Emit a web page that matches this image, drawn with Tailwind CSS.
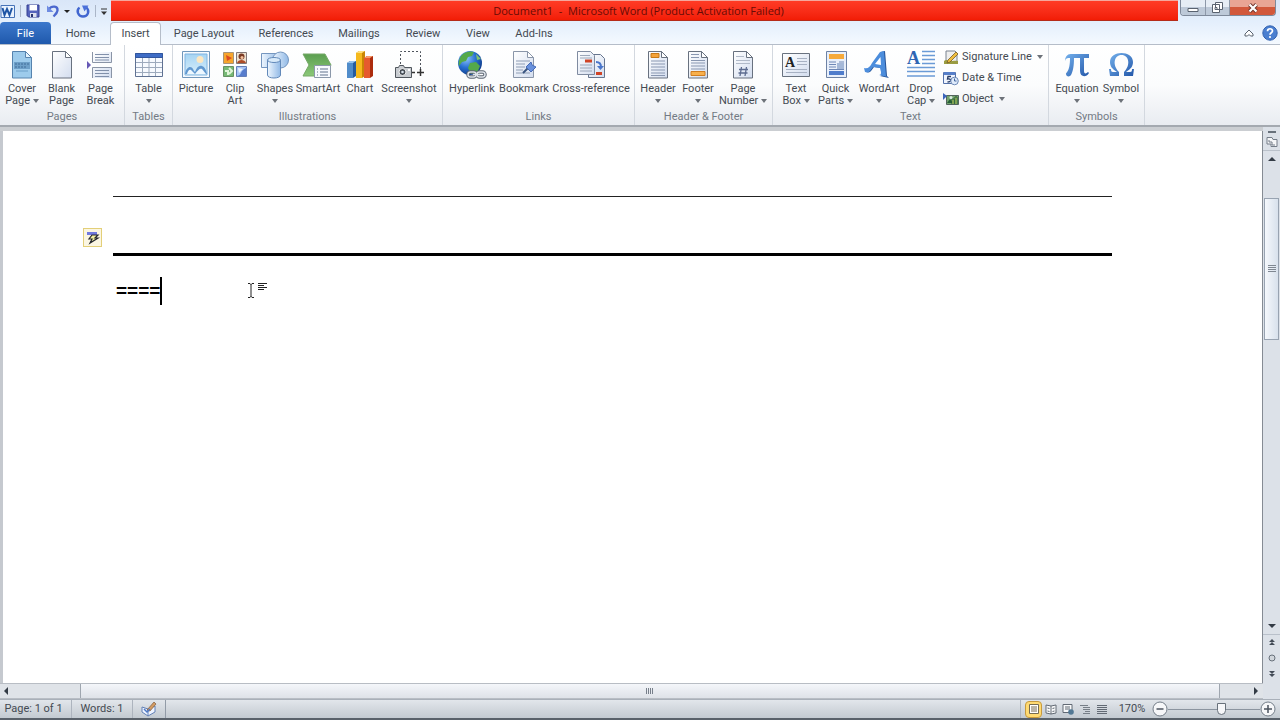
<!DOCTYPE html>
<html lang="en">
<head>
<meta charset="utf-8">
<meta name="viewport" content="width=device-width, initial-scale=1">
<title>Document1 - Microsoft Word</title>
<script src="https://cdn.jsdelivr.net/npm/@tailwindcss/browser@4"></script>
</head>
<body class="flex h-screen flex-col overflow-hidden bg-white font-[Roboto,'Noto_Sans',sans-serif] text-[11px] leading-3 text-[#444a52]">
<svg class="absolute size-0" aria-hidden="true">
  <defs>
    <linearGradient id="paper" x1="0" y1="0" x2="1" y2="1"><stop offset="0" stop-color="#fff"/><stop offset="1" stop-color="#d3ddef"/></linearGradient>
    <linearGradient id="sky" x1="0" y1="0" x2="0" y2="1"><stop offset="0" stop-color="#a5d4f3"/><stop offset="1" stop-color="#d9effb"/></linearGradient>
    <linearGradient id="blue" x1="0" y1="0" x2="1" y2="1"><stop offset="0" stop-color="#73b0ec"/><stop offset="1" stop-color="#2458aa"/></linearGradient>
    <linearGradient id="shape" x1="0" y1="0" x2="1" y2="0"><stop offset="0" stop-color="#eef6fe"/><stop offset="1" stop-color="#91b9e6"/></linearGradient>
    <linearGradient id="green" x1="0" y1="0" x2="0" y2="1"><stop offset="0" stop-color="#5b9e50"/><stop offset="1" stop-color="#8bc878"/></linearGradient>
    <radialGradient id="globe" cx=".35" cy=".3" r=".8"><stop offset="0" stop-color="#8fc5fb"/><stop offset=".5" stop-color="#276fd0"/><stop offset="1" stop-color="#0c337e"/></radialGradient>
    <symbol id="sheet" viewBox="0 0 32 32"><path d="M6.500 2.500h13l6 6v20.500h-19z" fill="url(#paper)" stroke="#68717f"/><path d="M19.500 2.500v6h6z" fill="#fff" stroke="#68717f"/></symbol>
  </defs>
</svg>

<div class="bg-linear-to-b from-[#d9e6f8] via-[#e4effc] to-[#f5faff]">
<header class="flex h-[22px] items-start">
  <div class="flex h-[22px] w-[111px] shrink-0 items-center">
    <svg class="size-4 shrink-0" viewBox="0 0 16 16"><path d="M1 2.500h13.500v12H1z" fill="#eaf3ff" stroke="#4773b8"/><path d="M2.500 5l2 7 2.500-6 2.500 6 2.500-7" fill="none" stroke="#1f55a5" stroke-width="2"/></svg>
    <span class="mx-1 h-3 w-px shrink-0 bg-[#aab6c8]"></span>
    <button aria-label="Save" class="size-4 shrink-0"><svg viewBox="0 0 16 16"><path d="M2 2h12v12H3.500L2 12.500z" fill="#5463bb" stroke="#343f91"/><path d="M4.500 2h7.500v5.500H4.500z" fill="#fff"/><path d="M5 10h6.500v4H5z" fill="#dce0ee"/><path d="M6 11h2v3H6z" fill="#27336f"/></svg></button>
    <button aria-label="Undo" class="ml-1 size-4 shrink-0"><svg viewBox="0 0 16 16"><path d="M3.500 6.500C7 2 13 3 12.500 7.500c-.3 2.500-2 4-4 6" fill="none" stroke="#4c68ce" stroke-width="2.300"/><path d="M2 2.500v6.500h6.500z" fill="#6e8be2"/></svg></button>
    <button aria-label="Undo history" class="ml-0.5 w-2 shrink-0"><svg viewBox="0 0 8 8"><path d="M1 3h6L4 6z" fill="#222"/></svg></button>
    <button aria-label="Repeat" class="ml-1 size-4 shrink-0"><svg viewBox="0 0 16 16"><path d="M4.500 4.500c-4 3.500-1 9 3.500 9 5 0 7-5.500 3.500-9" fill="none" stroke="#4166d0" stroke-width="2.300"/><path d="M7 2.500h6.500l-4 6z" fill="#4c71da"/></svg></button>
    <span class="mx-1 h-3 w-px shrink-0 bg-[#aab6c8]"></span>
    <button aria-label="Customize Quick Access Toolbar" class="w-2 shrink-0"><svg viewBox="0 0 8 10"><path d="M1 3h6" stroke="#333"/><path d="M1 5.500h6L4 9z" fill="#333"/></svg></button>
  </div>
  <h1 class="h-[21px] flex-1 border-y border-t-[#f5a79d] border-b-[#b52b19] bg-linear-to-b from-[#ff3b25] to-[#f21c05] text-center font-['Open_Sans','Noto_Sans',sans-serif] text-[11px] leading-5 font-normal text-[#680b05]"><span class="mr-3">Document1&nbsp; -&nbsp; Microsoft Word (Product Activation Failed)</span></h1>
  <div class="ml-[2px] mr-1 flex h-4 w-[96px] shrink-0 overflow-hidden rounded-b border border-t-0 border-[#7e899a]">
    <button aria-label="Minimize" class="flex flex-1 items-end justify-center border-r border-[#8d98a8] bg-linear-to-b from-[#e6edf5] from-50% to-[#bdc9d8] to-50% pb-0.5"><svg class="h-[6px] w-3" viewBox="0 0 12 6"><path d="M1 1.500h10v3H1z" fill="#fff" stroke="#59626f"/></svg></button>
    <button aria-label="Restore" class="flex flex-1 items-center justify-center border-r border-[#8d98a8] bg-linear-to-b from-[#e6edf5] from-50% to-[#bdc9d8] to-50%"><svg class="h-[13px] w-[13px]" viewBox="0 0 13 13"><path d="M4.500 1.500h7v7h-7zM1.500 3.500h7v8h-7z" fill="#fff" stroke="#59626f"/><path d="M4 6.500h2v2H4z" fill="#fff" stroke="#59626f"/></svg></button>
    <button aria-label="Close" class="flex w-[45px] items-center justify-center bg-linear-to-b from-[#e9a594] from-50% to-[#d2583b] to-50%"><svg class="h-[10px] w-3" viewBox="0 0 12 10"><path d="M2.500 1.500l7 7m0-7l-7 7" stroke="#70372e" stroke-width="4"/><path d="M2.500 1.500l7 7m0-7l-7 7" stroke="#fff" stroke-width="2.200"/></svg></button>
  </div>
</header>

<nav class="flex h-[23px] items-stretch border-b border-[#b5bdc9] text-center">
  <button class="w-[51px] rounded-t-sm bg-linear-to-b from-[#3c78cc] to-[#1f59ac] pt-px text-white">File</button>
  <button class="w-[59px] pt-px">Home</button>
  <button class="-mb-px w-[51px] rounded-t-sm border border-b-0 border-[#b5bdc9] bg-white">Insert</button>
  <button class="w-[86px] pt-px">Page Layout</button>
  <button class="w-[78px] pt-px">References</button>
  <button class="w-[68px] pt-px">Mailings</button>
  <button class="w-[60px] pt-px">Review</button>
  <button class="w-[50px] pt-px">View</button>
  <button class="w-[62px] pt-px">Add-Ins</button>
  <div class="mr-[2px] ml-auto flex items-center gap-2">
    <button aria-label="Minimize the Ribbon"><svg class="size-[10px]" viewBox="0 0 10 10"><path d="M1 6l4-4 4 4v2H6.500L5 6.500 3.500 8H1z" fill="#fff" stroke="#59626f"/></svg></button>
    <button aria-label="Help"><svg class="size-4" viewBox="0 0 16 16"><circle cx="8" cy="8" r="7.200" fill="#4a7fd0" stroke="#3463b0"/><path d="M5.500 6.200C5.600 3 10.600 3 10.500 6 10.400 7.800 8 7.800 8 9.800" fill="none" stroke="#fff" stroke-width="1.700"/><circle cx="8" cy="12" r="1.100" fill="#fff"/></svg></button>
  </div>
</nav>
</div>

<section aria-label="Insert ribbon" class="flex h-[82px] shrink-0 border-b-2 border-[#a4a9b0] bg-linear-to-b from-white via-[#fbfcfd] to-[#e9ecf1]">
  <div class="flex w-[125px] flex-col border-r border-[#d3d8df] pt-1">
    <div class="flex h-[60px] pl-[2px]">
      <button class="flex w-10 flex-col items-center gap-0.5"><svg class="size-8 shrink-0" viewBox="0 0 32 32"><path d="M6.500 2.500h13l6 6v20.500h-19z" fill="#9dcbec" stroke="#5683ae"/><path d="M19.500 2.500v6h6z" fill="#e6f4fd" stroke="#5683ae"/><path d="M8 13h16v7H8z" fill="#6d9fc8"/><path d="M9 15h14M9 18h11" stroke="#416d99" stroke-dasharray="2 1"/><path d="M10 22h12" stroke="#6d9fc8"/></svg><span>Cover<br>Page <svg class="inline h-1 w-[6px]" viewBox="0 0 6 4"><path d="M0 0h6L3 4z" fill="#6d7279"/></svg></span></button>
      <button class="flex w-[39px] flex-col items-center gap-0.5"><svg class="size-8 shrink-0"><use href="#sheet"/></svg><span>Blank<br>Page</span></button>
      <button class="flex w-[39px] flex-col items-center gap-0.5"><svg class="size-8 shrink-0" viewBox="0 0 32 32"><path d="M7.500 3v10.500h19V3M7.500 29V18.500h19V29" fill="url(#paper)" stroke="#8a94a6"/><path d="M10 5.500h14M10 8.500h14M10 11h14M10 21.500h14M10 24.500h14M10 27.500h14" stroke="#8190aa"/><path d="M2 12l4 4-4 4z" fill="#6658b5"/></svg><span>Page<br>Break</span></button>
    </div>
    <h2 class="text-center leading-4 text-[#737a84]">Pages</h2>
  </div>
  <div class="flex w-12 flex-col border-r border-[#d3d8df] pt-1">
    <div class="flex h-[60px] justify-center">
      <button class="flex w-10 flex-col items-center gap-0.5"><svg class="size-8 shrink-0" viewBox="0 0 32 32"><path d="M2.500 4.500h27v23h-27z" fill="#f7faff" stroke="#5f7192"/><path d="M2.500 4.500h27v4h-27z" fill="#3e6cc5" stroke="#31569e"/><path d="M3 13.500h26M3 18.500h26M3 23.500h26M9.500 9v18M16 9v18M22.500 9v18" stroke="#9daabd"/></svg><span class="flex flex-col items-center">Table<svg class="mt-1 h-1 w-[6px]" viewBox="0 0 6 4"><path d="M0 0h6L3 4z" fill="#6d7279"/></svg></span></button>
    </div>
    <h2 class="text-center leading-4 text-[#737a84]">Tables</h2>
  </div>
  <div class="flex w-[270px] flex-col border-r border-[#d3d8df] pt-1">
    <div class="flex h-[60px] pl-[3px]">
      <button class="flex w-10 flex-col items-center gap-0.5"><svg class="size-8 shrink-0" viewBox="0 0 32 32"><path d="M2.500 2.500h27v26h-27z" fill="#f5faff" stroke="#7197bb"/><path d="M5 5h22v21H5z" fill="url(#sky)" stroke="#80b4df"/><circle cx="20" cy="10.500" r="3.500" fill="#fce7c1"/><path d="M5 25c1-5 3-7 5-7 3 0 3 3 5 5 2-5 4-7 7-6 3 1 4 4 5 8z" fill="#6299d0"/><path d="M7 25c1-3 2-5 4-4l4 4c3-4 5-6 7-5l4 5z" fill="#eef8ff"/></svg><span>Picture</span></button>
      <button class="flex w-[38px] flex-col items-center gap-0.5"><svg class="size-8 shrink-0" viewBox="0 0 32 32"><path d="M4.500 3.500h10v11h-10z" fill="#f6a52c" stroke="#a69378"/><path d="M7 6l6 3-5 3z" fill="#dc4a21"/><path d="M17.500 3.500h10v11h-10z" fill="#eee1cf" stroke="#817879"/><circle cx="22.500" cy="7.500" r="3" fill="#7a3b24"/><path d="M18 14c1-4 8-4 9 0z" fill="#ae4c27"/><circle cx="23" cy="8.500" r="1.500" fill="#f4c09b"/><path d="M4.500 17.500h10v10h-10z" fill="#76b975" stroke="#679063"/><path d="M6 22h3v4m1-7l3 3-3 3" fill="none" stroke="#e1f5d9" stroke-width="2"/><path d="M17.500 17.500h10v10h-10z" fill="#a7c5f5" stroke="#647fb9"/><path d="M18 27c6-1 2-5 9-8v8z" fill="#577dcd"/><path d="M19 19l5 1-4 4z" fill="#eaf2ff"/></svg><span>Clip<br>Art</span></button>
      <button class="flex w-[42px] flex-col items-center gap-0.5"><svg class="size-8 shrink-0" viewBox="0 0 32 32"><path d="M2.500 4.500h17v14h-17z" fill="url(#shape)" stroke="#7596bf"/><circle cx="21.500" cy="11" r="8" fill="url(#shape)" stroke="#7596bf"/><path d="M8.500 11v15c0 4 13 4 13 0V11" fill="url(#shape)" stroke="#6289b9"/><ellipse cx="15" cy="11" rx="6.500" ry="2.500" fill="#d8eafa" stroke="#6289b9"/></svg><span class="flex flex-col items-center">Shapes<svg class="mt-1 h-1 w-[6px]" viewBox="0 0 6 4"><path d="M0 0h6L3 4z" fill="#6d7279"/></svg></span></button>
      <button class="flex w-11 flex-col items-center gap-0.5"><svg class="size-8 shrink-0" viewBox="0 0 32 32"><path d="M1 5h22l6 11-6 11H1l6-11z" fill="url(#green)" stroke="#76a968"/><path d="M12.500 16.500h16v12h-16z" fill="#f8faff" stroke="#8b98aa"/><path d="M15 20h1m2 0h8M15 23h1m2 0h8M15 26h1m2 0h8" stroke="#61738c"/></svg><span>SmartArt</span></button>
      <button class="flex w-10 flex-col items-center gap-0.5"><svg class="size-8 shrink-0" viewBox="0 0 32 32"><path d="M3 14l3-2h6v15l-3 2H3z" fill="#265c9f"/><path d="M3 14h6v15H3z" fill="#508cca"/><path d="M3 14l3-2h6l-3 2z" fill="#95c2ed"/><path d="M12 4l3-2h6v25l-3 2h-6z" fill="#ca8604"/><path d="M12 4h6v25h-6z" fill="#f5b91d"/><path d="M12 4l3-2h6l-3 2z" fill="#ffe07b"/><path d="M20 9l3-2h6v20l-3 2h-6z" fill="#ac2b0d"/><path d="M20 9h6v20h-6z" fill="#e65a2e"/><path d="M20 9l3-2h6l-3 2z" fill="#f99b6a"/></svg><span>Chart</span></button>
      <button class="flex w-[58px] flex-col items-center gap-0.5"><svg class="size-8 shrink-0" viewBox="0 0 32 32"><path d="M7.500 15V2.500h20V23" fill="none" stroke="#4f545d" stroke-dasharray="2 2"/><path d="M2.500 18.500h3l1-2h4l1 2h7v10h-16z" fill="#c8ccd1" stroke="#50565d"/><circle cx="9.500" cy="23" r="3.500" fill="#474d55" stroke="#eee"/><circle cx="9.500" cy="23" r="1.300" fill="#dbe4ed"/><path d="M15 20h2v2h-2z" fill="#fff"/><path d="M27.500 20v7M24 23.500h7M19 23.500h3" stroke="#333" stroke-width="1.500"/></svg><span class="flex flex-col items-center">Screenshot<svg class="mt-1 h-1 w-[6px]" viewBox="0 0 6 4"><path d="M0 0h6L3 4z" fill="#6d7279"/></svg></span></button>
    </div>
    <h2 class="text-center leading-4 text-[#737a84]">Illustrations</h2>
  </div>
  <div class="flex w-48 flex-col border-r border-[#d3d8df] pt-1">
    <div class="flex h-[60px] pl-1">
      <button class="flex w-[50px] flex-col items-center gap-0.5"><svg class="size-8 shrink-0" viewBox="0 0 32 32"><circle cx="14" cy="14" r="12" fill="url(#globe)"/><path d="M5 7c4-5 10-5 13-4l-2 4-4 1-2 4-4 1-3 4c-1-3 0-7 2-10zM14 14l6-1 4 4-3 7-6 1-3-6z" fill="#54a94b"/><path d="M20 5l5 5-4 1z" fill="#82c46e"/><g fill="none" stroke="#5d6773" stroke-width="3.500"><rect x="12" y="23" width="8" height="5" rx="2.500"/><rect x="21" y="23" width="8" height="5" rx="2.500"/></g><g fill="none" stroke="#dce1e8" stroke-width="1.500"><rect x="12" y="23" width="8" height="5" rx="2.500"/><rect x="21" y="23" width="8" height="5" rx="2.500"/><path d="M17 25.500h7"/></g></svg><span>Hyperlink</span></button>
      <button class="flex w-[54px] flex-col items-center gap-0.5"><svg class="size-8 shrink-0" viewBox="0 0 32 32"><path d="M5.500 2.500h14l6 6v20h-20z" fill="url(#paper)" stroke="#8a96a9"/><path d="M19.500 2.500v6h6z" fill="#fff" stroke="#8a96a9"/><path d="M8 12h14M8 15h9M8 18h9M8 21h7M8 24h14" stroke="#8e9db4"/><path d="M15 24l6-6" stroke="#39547f" stroke-width="2"/><path d="M18 18l5-5 1 3 4 2-5 5z" fill="#6991dc" stroke="#476bb6"/></svg><span>Bookmark</span></button>
      <button class="flex w-20 flex-col items-center gap-0.5 whitespace-nowrap"><svg class="size-8 shrink-0" viewBox="0 0 32 32"><path d="M13.500 5.500h12l4 4v19h-16z" fill="url(#paper)" stroke="#66758e"/><path d="M2.500 2.500h13l4 4v19h-17z" fill="url(#paper)" stroke="#7f8ba0"/><path d="M5 6.500h10M5 9h12M5 16h12M5 19h12M5 22h12" stroke="#9ca8ba"/><path d="M10 10.500h7v3h-7zM21 23h6v3h-6z" fill="#d04427"/><path d="M21 13c4 0 5 2 5 5" fill="none" stroke="#4a76cb" stroke-width="2"/><path d="M22 17h7l-3.500 4z" fill="#4a76cb"/></svg><span>Cross-reference</span></button>
    </div>
    <h2 class="text-center leading-4 text-[#737a84]">Links</h2>
  </div>
  <div class="flex w-[138px] flex-col border-r border-[#d3d8df] pt-1">
    <div class="flex h-[60px] pl-[3px]">
      <button class="flex w-10 flex-col items-center gap-0.5"><svg class="size-8 shrink-0" viewBox="0 0 32 32"><use href="#sheet"/><path d="M9 4.500h8v4H9z" fill="#f5a33a" stroke="#c77917"/><path d="M9 12h14M9 15h14M9 18h14M9 21h14M9 24h14M9 26.500h14" stroke="#8997b1"/></svg><span class="flex flex-col items-center">Header<svg class="mt-1 h-1 w-[6px]" viewBox="0 0 6 4"><path d="M0 0h6L3 4z" fill="#6d7279"/></svg></span></button>
      <button class="flex w-10 flex-col items-center gap-0.5"><svg class="size-8 shrink-0" viewBox="0 0 32 32"><use href="#sheet"/><path d="M9 5.500h8M9 8.500h8M9 11.500h14M9 14h14M9 17h14M9 20h14" stroke="#8997b1"/><path d="M9 22.500h14v4H9z" fill="#f8b04c" stroke="#d07d20"/></svg><span class="flex flex-col items-center">Footer<svg class="mt-1 h-1 w-[6px]" viewBox="0 0 6 4"><path d="M0 0h6L3 4z" fill="#6d7279"/></svg></span></button>
      <button class="flex w-[50px] flex-col items-center gap-0.5"><svg class="size-8 shrink-0" viewBox="0 0 32 32"><use href="#sheet"/><path d="M9 7.500h8M9 11.500h14M9 14.500h14" stroke="#b1bac9"/><path d="M14.500 18l-1.500 9M19.500 18l-1.500 9M12 20.500h9M11.500 24h9" stroke="#5d6c90" stroke-width="1.300"/></svg><span class="whitespace-nowrap">Page<br>Number <svg class="inline h-1 w-[6px]" viewBox="0 0 6 4"><path d="M0 0h6L3 4z" fill="#6d7279"/></svg></span></button>
    </div>
    <h2 class="text-center leading-4 text-[#737a84]">Header &amp; Footer</h2>
  </div>
  <div class="flex w-[276px] flex-col border-r border-[#d3d8df] pt-1">
    <div class="flex h-[60px] pl-[3px]">
      <button class="flex w-10 flex-col items-center gap-0.5"><svg class="size-8 shrink-0" viewBox="0 0 32 32"><path d="M2.500 4.500h27v23h-27z" fill="url(#paper)" stroke="#69727f"/><text x="5" y="18" font-family="Liberation Serif, serif" font-weight="700" font-size="14" fill="#222">A</text><path d="M17 9.500h10M17 12.500h10M17 15.500h10M6 20.500h21M6 23.500h21" stroke="#a7b1c3"/></svg><span>Text<br>Box <svg class="inline h-1 w-[6px]" viewBox="0 0 6 4"><path d="M0 0h6L3 4z" fill="#6d7279"/></svg></span></button>
      <button class="flex w-[39px] flex-col items-center gap-0.5"><svg class="size-8 shrink-0" viewBox="0 0 32 32"><path d="M6.500 2.500h20v26h-20z" fill="#e8effa" stroke="#6d82a5"/><path d="M9 5h15v5H9z" fill="#f5a93b"/><path d="M9 13h7M9 15.500h7M19 13h5M9 18h7M9 20.500h15" stroke="#6e88b7"/><path d="M17 14h7v6h-7z" fill="#a4b8d8"/><path d="M9 22h15v4H9z" fill="#4f7ccb"/></svg><span>Quick<br>Parts <svg class="inline h-1 w-[6px]" viewBox="0 0 6 4"><path d="M0 0h6L3 4z" fill="#6d7279"/></svg></span></button>
      <button class="flex w-12 flex-col items-center gap-0.5"><svg class="size-8 shrink-0" viewBox="0 0 32 32"><path d="M2 20c4 1 6-1 8-5L18 3l4-1 2 25 2 2-9-2c2 0 2-1 2-3l-1-5-7-1-3 4c-1 1-2 2-5 1z" fill="#245297"/><path d="M1 19c4 1 6-1 8-5L17 3l4-1 2 25 2 1-9-2c2 0 2-1 2-3l-1-4-7-1-3 4c-1 1-2 2-5 1z" fill="#4c8ddc"/><path d="M17.500 8l.5 8-6-1z" fill="#fff"/></svg><span class="flex flex-col items-center">WordArt<svg class="mt-1 h-1 w-[6px]" viewBox="0 0 6 4"><path d="M0 0h6L3 4z" fill="#6d7279"/></svg></span></button>
      <button class="flex w-9 flex-col items-center gap-0.5"><svg class="size-8 shrink-0" viewBox="0 0 32 32"><text x="2" y="15" font-family="Liberation Serif, serif" font-weight="700" font-size="18" fill="#2f65b3">A</text><path d="M17 2.500h13M17 6.500h13M17 10.500h13M17 14.500h13M2 18.500h28M2 22.500h28M2 27h28" stroke="#6b9bd6" stroke-width="1.300"/></svg><span>Drop<br>Cap <svg class="inline h-1 w-[6px]" viewBox="0 0 6 4"><path d="M0 0h6L3 4z" fill="#6d7279"/></svg></span></button>
      <div class="ml-1 flex flex-col gap-[5px]">
        <button class="flex h-4 items-center gap-[3px] whitespace-nowrap"><svg class="size-4 shrink-0" viewBox="0 0 16 16"><path d="M3 2h9l2 2v9H3z" fill="#eee" stroke="#7b8390"/><path d="M1 12c4-3 5 2 7-1 1 2 3 0 7 1v3H1z" fill="#9a9c42"/><path d="M5 11l8-8 2 2-8 8-3 1z" fill="#f0bd3d" stroke="#755c27" stroke-width=".8"/></svg>Signature Line<svg class="ml-0.5 h-1 w-[6px]" viewBox="0 0 6 4"><path d="M0 0h6L3 4z" fill="#6d7279"/></svg></button>
        <button class="flex h-4 items-center gap-[3px] whitespace-nowrap"><svg class="size-4 shrink-0" viewBox="0 0 16 16"><path d="M.5 2.500h12v11H.5z" fill="#eff4fe" stroke="#5471aa"/><path d="M1 2h11v3H1z" fill="#577fc9"/><path d="M8 6.500H5l-.5 2.500c4-.8 4.500 3 0 3" fill="none" stroke="#263962" stroke-width="1.300"/><circle cx="11.500" cy="11" r="3.800" fill="#dfebfb" stroke="#6b87b5"/><path d="M11.500 8.500V11h2" fill="none" stroke="#43649c"/></svg>Date &amp; Time</button>
        <button class="flex h-4 items-center gap-[3px] whitespace-nowrap"><svg class="size-4 shrink-0" viewBox="0 0 16 16"><path d="M3.500 4.500h12v9h-12z" fill="#73a36d" stroke="#53645d"/><path d="M4 12l3-4 3 4z" fill="#265f35"/><path d="M9 13V8h2v5m1 0V6h2v7" fill="#e2ed72" stroke="#205733"/><circle cx="8" cy="6.500" r="1.500" fill="#d9ebe2"/><path d="M0 2l4 3-4 4z" fill="#3a64bc"/></svg>Object<svg class="ml-0.5 h-1 w-[6px]" viewBox="0 0 6 4"><path d="M0 0h6L3 4z" fill="#6d7279"/></svg></button>
      </div>
    </div>
    <h2 class="text-center leading-4 text-[#737a84]">Text</h2>
  </div>
  <div class="flex w-24 flex-col border-r border-[#d3d8df] pt-1">
    <div class="flex h-[60px] pl-1">
      <button class="flex w-12 flex-col items-center gap-0.5"><svg class="size-8 shrink-0" viewBox="0 0 32 32"><path d="M4 11c1-5 3-6 7-6h17v4h-5v13c0 3 2 3 4 1l1 1c-3 5-9 4-9-2V9h-6c0 8-1 13-3 17-1 2-5 2-5-1 0-2 4-2 4-16-3 0-4 0-5 3z" fill="url(#blue)"/></svg><span class="flex flex-col items-center">Equation<svg class="mt-1 h-1 w-[6px]" viewBox="0 0 6 4"><path d="M0 0h6L3 4z" fill="#6d7279"/></svg></span></button>
      <button class="flex w-10 flex-col items-center gap-0.5"><svg class="size-8 shrink-0" viewBox="0 0 32 32"><path d="M4 20h2c0 3 1 3 3 3h3c-5-3-7-6-7-10C5 1 28 1 28 13c0 4-2 7-7 10h3c2 0 3 0 3-3h2l-1 7h-9v-4c7-7 5-17-2.500-17S7 16 14 23v4H5z" fill="url(#blue)"/></svg><span class="flex flex-col items-center">Symbol<svg class="mt-1 h-1 w-[6px]" viewBox="0 0 6 4"><path d="M0 0h6L3 4z" fill="#6d7279"/></svg></span></button>
    </div>
    <h2 class="text-center leading-4 text-[#737a84]">Symbols</h2>
  </div>
</section>

<div class="flex min-h-0 flex-1 bg-[#cbced2] pt-1">
  <div class="flex min-w-0 flex-1 flex-col">
    <main class="min-h-0 flex-1 border-r border-l-[3px] border-r-[#858b93] border-l-[#c5c9cf] bg-white pt-[65px] pr-[150px] pl-20 text-black">
      <hr class="ml-[30px] border-t border-[#222]">
      <div class="mt-[31px] flex h-[19px]">
        <button aria-label="AutoCorrect Options" class="size-[19px] border border-[#e3cf78] bg-[#fbf6e2]"><svg viewBox="0 0 17 17"><path d="M3 3h10v3H3z" fill="#7079df"/><path d="M8 6h6l-3 3h3l-8 5 2-4H5z" fill="#f2f0a0" stroke="#26282d" stroke-width="1.200"/></svg></button>
      </div>
      <hr class="mt-[6px] ml-[30px] border-t-[3px] border-black">
      <div class="mt-[21px] ml-[33px] flex h-7 items-center">
        <p class="font-['Liberation_Sans',sans-serif] text-[19px] leading-7 font-bold">====</p><span class="h-7 w-[2px] bg-black"></span>
        <svg class="ml-[85px] h-6 w-5" viewBox="0 0 20 24"><path d="M1 4.500h2l1 1 1-1h2M4 5v13M1 18.500h2l1-1 1 1h2" fill="none" stroke="#222"/><path d="M11 4.500h9M11 6.500h6M11 8.500h9M11 10.500h6" stroke="#222"/></svg>
      </div>
    </main>
    <div class="flex h-4 items-center border-y border-[#b8bdc4] bg-[#dfe3e8]">
      <button aria-label="Scroll left" class="flex w-20 justify-start pl-[3px]"><svg class="h-2 w-[6px]" viewBox="0 0 6 8"><path d="M5 0v8L1 4z" fill="#333b45"/></svg></button>
      <div class="flex h-[14px] flex-1 items-center justify-center border-x border-[#9fa6af] bg-linear-to-b from-[#f4f6fa] to-[#dee2e8]"><svg class="h-2 w-2" viewBox="0 0 8 8"><path d="M.5 1v6M2.500 1v6M4.500 1v6M6.500 1v6" stroke="#777f8a"/></svg></div>
      <button aria-label="Scroll right" class="flex w-[43px] justify-end pr-1"><svg class="h-2 w-[6px]" viewBox="0 0 6 8"><path d="M1 0v8l4-4z" fill="#333b45"/></svg></button>
    </div>
  </div>
  <div class="-mt-1 flex w-[17px] flex-col items-center bg-[#dce1e8]">
    <span class="mt-1 h-[2px] w-2 shrink-0 bg-[#68717b]"></span>
    <button aria-label="View ruler" class="mt-[3px] size-3 shrink-0"><svg viewBox="0 0 12 12"><path d="M1 1.500h5l1 2h4v7H5V8H1z" fill="#f5f6f8" stroke="#747d88"/><path d="M3 4v2h3v3h3" fill="none" stroke="#747d88"/></svg></button>
    <span class="mt-[2px] h-px w-full shrink-0 bg-[#bac1ca]"></span>
    <button aria-label="Scroll up" class="mt-1 w-2 shrink-0"><svg viewBox="0 0 8 8"><path d="M0 6h8L4 2z" fill="#333b45"/></svg></button>
    <div class="mt-[35px] flex h-[142px] w-[15px] shrink-0 items-center justify-center border border-[#98a3b1] bg-linear-to-r from-[#f5f8fc] to-[#d8e1ec]"><svg class="h-2 w-2" viewBox="0 0 8 8"><path d="M0 .5h8M0 2.500h8M0 4.500h8M0 6.500h8" stroke="#7f8791"/></svg></div>
    <button aria-label="Scroll down" class="mt-auto w-2"><svg viewBox="0 0 8 8"><path d="M0 2h8L4 6z" fill="#333b45"/></svg></button>
    <span class="mt-1 h-px w-full shrink-0 bg-[#b9c0ca]"></span>
    <button aria-label="Previous page" class="mt-[3px] w-2"><svg viewBox="0 0 8 8"><path d="M1 4l3-3 3 3zM1 7l3-3 3 3z" fill="#434b56"/></svg></button>
    <button aria-label="Select browse object" class="mt-2 w-2"><svg viewBox="0 0 8 8"><circle cx="4" cy="4" r="3" fill="#d1d6dc" stroke="#68717b"/></svg></button>
    <button aria-label="Next page" class="mt-2 mb-[21px] w-2"><svg viewBox="0 0 8 8"><path d="M1 1l3 3 3-3zM1 4l3 3 3-3z" fill="#434b56"/></svg></button>
  </div>
</div>

<footer class="flex h-[21px] shrink-0 items-center border-t border-b-2 border-t-[#a9b0b9] border-b-[#59616a] bg-linear-to-b from-[#e2e6eb] to-[#c3cad1]">
  <button class="h-full w-[72px] border-r border-[#adb4be] pr-1">Page: 1 of 1</button>
  <button class="h-full w-[61px] border-r border-[#adb4be]">Words: 1</button>
  <button aria-label="Proofing" class="flex h-full w-[33px] items-center justify-center border-r border-[#929ba7]"><svg class="size-4" viewBox="0 0 16 16"><path d="M1 6l6 2 7-3v6l-7 4-6-4z" fill="#edf3ff" stroke="#6280b5"/><path d="M7 8v7" stroke="#6280b5"/><path d="M6 9l7-8 2 2-6 7z" fill="#d39b62" stroke="#815c3b" stroke-width=".7"/><path d="M3 8l3 3 3-3" fill="none" stroke="#4e7ac6" stroke-width="1.500"/></svg></button>
  <div class="ml-auto flex h-full items-center border-l border-[#adb4be] pl-1">
    <button aria-label="Print Layout" class="flex size-[17px] items-center justify-center rounded-sm border border-[#c79a3d] bg-[#ffda72]"><svg class="size-3" viewBox="0 0 12 12"><path d="M1.500 1.500h9v9h-9z" fill="#fff" stroke="#766b50"/><path d="M3 4h6M3 6h6M3 8h6" stroke="#766b50"/></svg></button>
    <button aria-label="Full Screen Reading" class="ml-[3px] size-3"><svg viewBox="0 0 12 12"><path d="M1 2l5 1 5-1v8l-5 1-5-1z" fill="#f8f9fa" stroke="#626a74"/><path d="M6 3v8M2.500 5l2 .5M7.500 5.500l2-.5M2.500 8l2 .5M7.500 8.500l2-.5" stroke="#626a74"/></svg></button>
    <button aria-label="Web Layout" class="ml-[5px] size-3"><svg viewBox="0 0 12 12"><path d="M1 1.500h9v8H1z" fill="#f8f9fa" stroke="#626a74"/><path d="M3 4h5M3 6h5" stroke="#626a74"/><circle cx="9" cy="9" r="2.800" fill="#527894"/></svg></button>
    <button aria-label="Outline" class="ml-[5px] size-3"><svg viewBox="0 0 12 12"><path d="M1 2.500h8M4 4.500h7M4 6.500h7M6 8.500h5M4 10.500h7" stroke="#777f88"/></svg></button>
    <button aria-label="Draft" class="ml-[5px] size-3"><svg viewBox="0 0 12 12"><path d="M1 2.500h10M1 4.500h10M1 6.500h10M1 8.500h10M1 10.500h10" stroke="#626a74"/></svg></button>
    <button class="ml-[8px] w-8 text-center">170%</button>
    <button aria-label="Zoom out" class="ml-1 size-4"><svg viewBox="0 0 16 16"><circle cx="8" cy="8" r="7" fill="#f6f7f9" stroke="#747e89"/><path d="M4.500 8h7" stroke="#4b535e" stroke-width="1.500"/></svg></button>
    <input type="range" min="10" max="500" value="302" aria-label="Zoom" class="h-4 w-[92px] appearance-none bg-transparent [&::-webkit-slider-runnable-track]:h-px [&::-webkit-slider-runnable-track]:bg-[#8b949f] [&::-webkit-slider-thumb]:-mt-[6px] [&::-webkit-slider-thumb]:h-3 [&::-webkit-slider-thumb]:w-[9px] [&::-webkit-slider-thumb]:appearance-none [&::-webkit-slider-thumb]:rounded-b-full [&::-webkit-slider-thumb]:border [&::-webkit-slider-thumb]:border-[#68717b] [&::-webkit-slider-thumb]:bg-[#f6f7f9]">
    <button aria-label="Zoom in" class="mr-1 size-4"><svg viewBox="0 0 16 16"><circle cx="8" cy="8" r="7" fill="#f6f7f9" stroke="#747e89"/><path d="M4 8h8M8 4v8" stroke="#4b535e" stroke-width="1.500"/></svg></button>
  </div>
</footer>
</body>
</html>
